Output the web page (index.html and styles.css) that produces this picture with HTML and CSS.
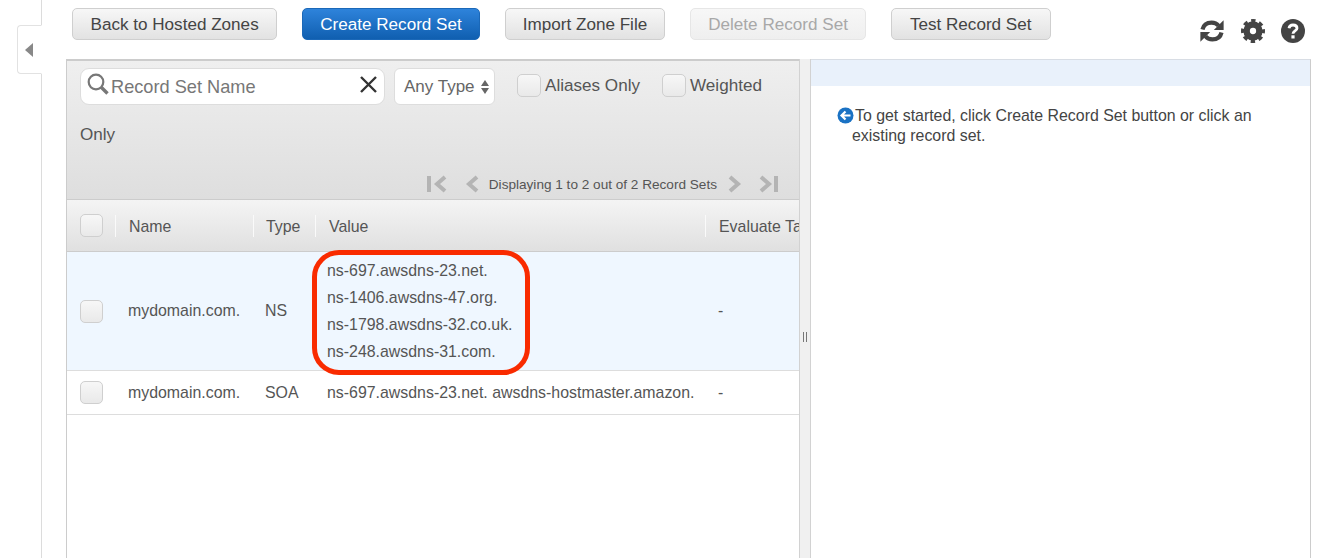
FILE: index.html
```html
<!DOCTYPE html>
<html lang="en">
<head>
    <meta charset="UTF-8">
    <title>Record Sets</title>
    <link rel="stylesheet" href="styles.css">
</head>
<body>
<div class="page">
    <div class="sidebar">
        <div class="side-tab"><span class="side-arrow"></span></div>
    </div>
    <div class="main">
        <div class="toolbar">
            <button class="btn btn-back">Back to Hosted Zones</button>
            <button class="btn btn-primary">Create Record Set</button>
            <button class="btn">Import Zone File</button>
            <button class="btn btn-disabled">Delete Record Set</button>
            <button class="btn btn-test">Test Record Set</button>
            <div class="tool-icons">
                <svg class="icon-sync" width="26" height="24" viewBox="0 0 26 24">
                    <path d="M3.500 10.500C4.500 6 8 3.600 12.600 3.600c3 0 5.400 1.200 7 3.200" fill="none" stroke="#444" stroke-width="4.200"/>
                    <path d="M24.600 1.200v9.800h-9.800z" fill="#444"/>
                    <path d="M22.500 13.500c-1 4.500-4.500 6.900-9.100 6.900-3 0-5.400-1.200-7-3.200" fill="none" stroke="#444" stroke-width="4.200"/>
                    <path d="M1.400 22.800V13h9.800z" fill="#444"/>
                </svg>
                <svg class="icon-cog" width="24" height="24" viewBox="0 0 24 24">
                    <circle cx="12" cy="12" r="6.400" fill="none" stroke="#444" stroke-width="6.500"/>
                    <circle cx="12" cy="12" r="10" fill="none" stroke="#444" stroke-width="4" stroke-dasharray="4.200 3.654" stroke-dashoffset="2.100"/>
                </svg>
                <svg class="icon-help" width="24" height="24" viewBox="0 0 24 24">
                    <circle cx="12" cy="12" r="12" fill="#444"/>
                    <path d="M8 9.300c.3-2.200 1.900-3.300 4-3.300 2.300 0 4 1.300 4 3.200 0 2.700-4 2.800-4 5.500" fill="none" stroke="#fff" stroke-width="2.800"/>
                    <rect x="10.400" y="16.300" width="3.200" height="3.200" fill="#fff"/>
                </svg>
            </div>
        </div>

        <div class="panels">
            <div class="panel-left">
                <div class="filters">
                    <div class="filter-row">
                        <div class="search">
                            <svg class="search-icon" width="24" height="24" viewBox="0 0 24 24">
                                <circle cx="10" cy="9" r="7.300" fill="none" stroke="#777" stroke-width="2.200"/>
                                <path d="M15 14l6.500 6.500" stroke="#777" stroke-width="3.400"/>
                            </svg>
                            <span class="search-text">Record Set Name</span>
                            <svg class="search-clear" width="20" height="20" viewBox="0 0 20 20">
                                <path d="M2 2l15 15M17 2L2 17" stroke="#333" stroke-width="2.400"/>
                            </svg>
                        </div>
                        <div class="type-select">
                            <span class="type-text">Any Type</span>
                            <span class="updown"><i class="up"></i><i class="down"></i></span>
                        </div>
                        <label class="check-label check-aliases"><span class="check"></span>Aliases Only</label>
                        <label class="check-label"><span class="check"></span>Weighted</label>
                    </div>
                    <div class="only">Only</div>
                    <div class="pager">
                        <svg width="22" height="18" viewBox="0 0 22 18">
                            <path d="M2 1h4v16H2z" fill="#b4b4b4"/>
                            <path d="M20 2l-8 7 8 7" fill="none" stroke="#b4b4b4" stroke-width="4"/>
                        </svg>
                        <svg class="pager-prev" width="14" height="18" viewBox="0 0 14 18">
                            <path d="M12 2L4 9l8 7" fill="none" stroke="#b4b4b4" stroke-width="4"/>
                        </svg>
                        <span class="pager-text">Displaying 1 to 2 out of 2 Record Sets</span>
                        <svg class="pager-next" width="14" height="18" viewBox="0 0 14 18">
                            <path d="M2 2l8 7-8 7" fill="none" stroke="#b4b4b4" stroke-width="4"/>
                        </svg>
                        <svg class="pager-last" width="22" height="18" viewBox="0 0 22 18">
                            <path d="M2 2l8 7-8 7" fill="none" stroke="#b4b4b4" stroke-width="4"/>
                            <path d="M15 1h4v16h-4z" fill="#b4b4b4"/>
                        </svg>
                    </div>
                </div>

                <div class="row head-row">
                    <div class="cell cell-check"><span class="check"></span></div>
                    <div class="cell cell-name">Name</div>
                    <div class="cell cell-type">Type</div>
                    <div class="cell cell-value">Value</div>
                    <div class="cell cell-eval">Evaluate Target Health</div>
                </div>
                <div class="row row-selected">
                    <div class="cell cell-check"><span class="check"></span></div>
                    <div class="cell cell-name">mydomain.com.</div>
                    <div class="cell cell-type">NS</div>
                    <div class="cell cell-value value-list">
                        <div>ns-697.awsdns-23.net.</div>
                        <div>ns-1406.awsdns-47.org.</div>
                        <div>ns-1798.awsdns-32.co.uk.</div>
                        <div>ns-248.awsdns-31.com.</div>
                        <div class="highlight"></div>
                    </div>
                    <div class="cell cell-eval">-</div>
                </div>
                <div class="row row-plain">
                    <div class="cell cell-check"><span class="check"></span></div>
                    <div class="cell cell-name">mydomain.com.</div>
                    <div class="cell cell-type">SOA</div>
                    <div class="cell cell-value">ns-697.awsdns-23.net. awsdns-hostmaster.amazon.</div>
                    <div class="cell cell-eval">-</div>
                </div>
            </div>

            <div class="splitter"><span class="grip"></span></div>

            <div class="panel-right">
                <div class="right-head"></div>
                <div class="hint">
                    <svg class="hint-icon" width="17" height="17" viewBox="0 0 17 17">
                        <circle cx="8.500" cy="8.500" r="8" fill="#1a72c4"/>
                        <path d="M13.500 8.500H5M8.500 4.500l-4 4 4 4" fill="none" stroke="#fff" stroke-width="2.200"/>
                    </svg>To get started, click Create Record Set button or click an existing record set.
                </div>
            </div>
        </div>
    </div>
</div>
</body>
</html>
```

FILE: styles.css
```css
* {
    box-sizing: border-box;
}
html, body {
    margin: 0;
    height: 558px;
    overflow: hidden;
    background-color: #fff;
}
body {
    font-family: "Liberation Sans", Arial, sans-serif;
    color: #444;
}
.page {
    display: flex;
    height: 558px;
}

/* left strip */
.sidebar {
    width: 42px;
    flex: none;
    padding-top: 25px;
    border-right: 1px solid #dcdcdc;
}
.side-tab {
    width: 25px;
    height: 49px;
    margin-left: 17px;
    display: flex;
    align-items: center;
    justify-content: center;
    padding-right: 1px;
    background-color: #fff;
    border: 1px solid #e2e2e2;
    border-right: 1px solid #fff;
    border-radius: 4px 0 0 4px;
}
.side-arrow {
    border-style: solid;
    border-width: 7px 8px 7px 0;
    border-color: transparent #888 transparent transparent;
}

.main {
    flex: 1;
    min-width: 0;
    padding: 8px 17px 0 24px;
}

/* buttons */
.toolbar {
    display: flex;
    align-items: flex-start;
    gap: 25px;
    height: 51px;
    margin-left: 6px;
}
.btn {
    height: 32px;
    padding: 1px 17px 0;
    font-family: inherit;
    font-size: 17.100px;
    color: #444;
    background: linear-gradient(#f7f7f7, #e2e2e2);
    border: 1px solid #cfcfcf;
    border-radius: 5px;
    white-space: nowrap;
}
.btn-back {
    padding: 1px 17.500px 0;
}
.btn-test {
    padding: 1px 18px 0;
}
.btn-primary {
    color: #fff;
    background: linear-gradient(#2e83db, #105fb0);
    border-color: #1b68b8;
}
.btn-disabled {
    color: #a8a8a8;
    background: linear-gradient(#f7f7f7, #efefef);
    border-color: #e6e6e6;
}
.tool-icons {
    margin-left: auto;
    margin-top: 11px;
    display: flex;
    gap: 16px;
    padding-right: 6px;
}

.panels {
    display: flex;
    height: 499px;
}

/* left panel */
.panel-left {
    width: 733px;
    flex: none;
    overflow: hidden;
    border-left: 1px solid #ccc;
}
.filters {
    height: 141px;
    padding: 7px 12px 0 13px;
    background: linear-gradient(#efefef, #dedede);
    border-top: 2px solid #ccc;
    border-bottom: 1px solid #ccc;
}
.filter-row {
    display: flex;
    align-items: flex-start;
    height: 37px;
}
.search {
    width: 305px;
    height: 37px;
    display: flex;
    align-items: center;
    padding: 0 5px;
    background-color: #fff;
    border: 1px solid #ddd;
    border-radius: 9px;
}
.search-icon {
    margin-top: -4px;
}
.search-text {
    margin-left: 1px;
    padding-top: 2px;
    font-size: 18.200px;
    color: #777;
}
.search-clear {
    margin-left: auto;
    margin-top: -4px;
}
.type-select {
    width: 101px;
    height: 37px;
    margin-left: 9px;
    display: flex;
    align-items: center;
    justify-content: space-between;
    padding: 0 5px 0 9px;
    font-size: 17px;
    color: #666;
    background-color: #fff;
    border: 1px solid #ddd;
    border-radius: 6px;
}
.type-text {
    padding-top: 1px;
}
.updown {
    display: flex;
    flex-direction: column;
    gap: 2px;
}
.updown i {
    border-style: solid;
    border-color: transparent;
    border-width: 0 4px;
}
.updown .up {
    border-bottom: 6px solid #666;
}
.updown .down {
    border-top: 6px solid #666;
}
.check-label {
    display: flex;
    align-items: center;
    height: 35px;
    margin-left: 22px;
    font-size: 17.100px;
    color: #555;
}
.check {
    display: block;
    width: 23.500px;
    height: 23px;
    background: linear-gradient(#f7f7f7, #e9e9e9);
    border: 1px solid #cfcfcf;
    border-radius: 5px;
}
.check-label .check {
    margin-right: 4.500px;
}
.only {
    margin-top: 20px;
    font-size: 17.100px;
    line-height: 20px;
    color: #555;
}
.pager {
    display: flex;
    align-items: center;
    justify-content: flex-end;
    margin-top: 28px;
    padding-right: 6px;
    height: 22px;
}
.pager-prev {
    margin-left: 18px;
}
.pager-text {
    margin: 0 11px 0 10px;
    font-size: 13.600px;
    color: #555;
}
.pager-last {
    margin-left: 17px;
}

/* record table */
.row {
    display: grid;
    grid-template-columns: 48px 138px 62px 390px 200px;
    align-items: center;
    font-size: 15.900px;
    color: #555;
}
.cell {
    padding-left: 13px;
    white-space: nowrap;
}
.cell-check {
    padding-left: 12.500px;
}
.cell-type,
.cell-value {
    padding-left: 12px;
}
.head-row {
    height: 52px;
    background: linear-gradient(#f4f4f4, #e0e0e0);
    border-bottom: 1px solid #ccc;
}
.head-row .cell-name,
.head-row .cell-type,
.head-row .cell-value,
.head-row .cell-eval {
    height: 22px;
    line-height: 24px;
    border-left: 1px solid #fafafa;
}
.head-row .cell-value {
    padding-left: 13px;
}
.row-selected {
    height: 119px;
    background-color: #eff7ff;
    border-bottom: 1px solid #ddd;
}
.row-plain {
    height: 44px;
    border-bottom: 1px solid #ddd;
}
.value-list {
    position: relative;
    line-height: 27px;
}
.highlight {
    position: absolute;
    left: -3px;
    top: -7px;
    width: 218px;
    height: 125px;
    border: 5px solid #f92b00;
    border-radius: 27px;
}

.splitter {
    width: 12px;
    flex: none;
    position: relative;
    background-color: #f0f0f0;
    border-left: 1px solid #d2d2d2;
    border-right: 1px solid #d2d2d2;
}
.grip {
    position: absolute;
    left: 3px;
    top: 273px;
    width: 4px;
    height: 10px;
    border-left: 1px solid #777;
    border-right: 1px solid #777;
}

/* right panel */
.panel-right {
    flex: 1;
    border-right: 1px solid #ccc;
    border-top: 1px solid #d8dde4;
}
.right-head {
    height: 26px;
    background-color: #e9f1fb;
}
.hint {
    margin: 20px 30px 0 41px;
    font-size: 15.900px;
    line-height: 20px;
    color: #444;
}
.hint-icon {
    vertical-align: -3px;
    margin-left: -15px;
    margin-right: 1px;
}
```
